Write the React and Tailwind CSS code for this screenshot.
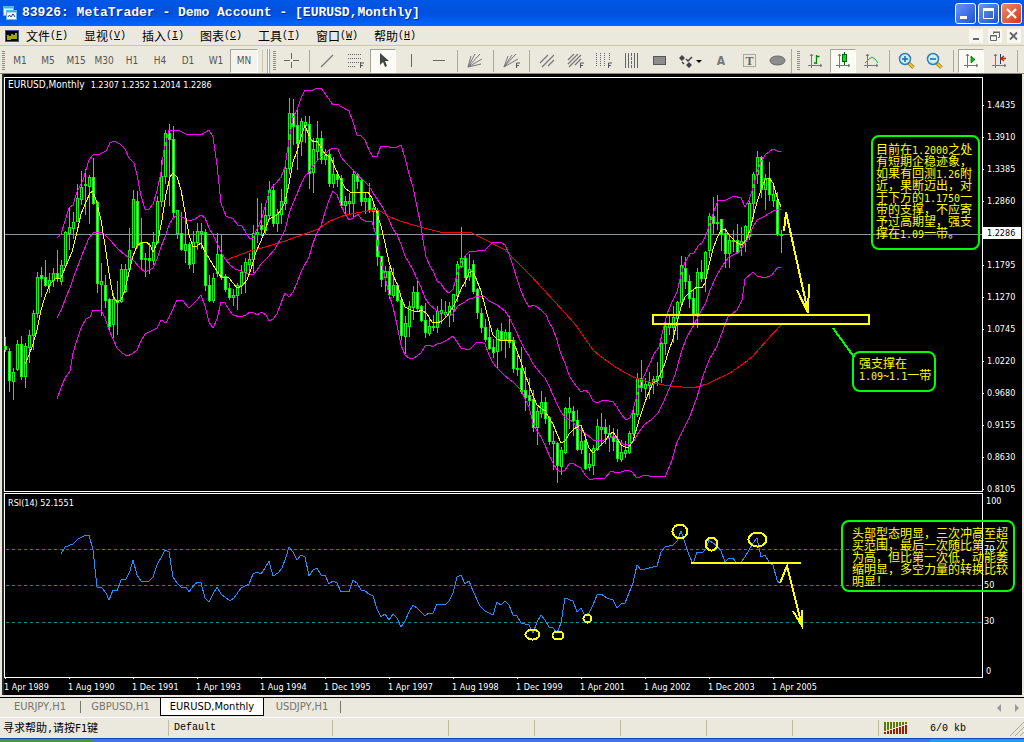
import React, { useState } from 'react';

const UI = "font-['DejaVu_Sans_Condensed','DejaVu_Sans',sans-serif]";
const CJK = "font-['Noto_Sans_CJK_SC',sans-serif]";

// [high, body top, body bottom, low, falling]; one candle every 4 units
const CANDLES = [
  [337,346,349,351,1],[348,351,380,391,1],[368,372,381,399,0],[340,344,369,370,0],[336,344,376,379,1],
  [343,346,376,387,0],[330,335,347,362,0],[310,313,335,349,0],[272,277,313,317,0],[267,275,278,296,1],
  [260,277,285,286,1],[273,280,285,292,0],[268,273,280,286,0],[250,273,278,281,1],[260,265,281,284,0],
  [231,232,265,266,0],[208,227,233,249,0],[212,222,228,238,0],[184,198,221,221,0],[171,187,199,204,0],
  [169,184,185,214,0],[175,177,186,223,0],[158,177,203,204,1],[201,202,283,292,1],[263,281,284,315,0],
  [275,285,300,307,1],[298,299,326,330,1],[293,299,324,337,0],[281,300,302,334,0],[264,269,301,302,0],
  [264,269,291,292,0],[228,250,269,270,0],[190,199,247,247,0],[191,201,245,247,1],[218,242,259,269,1],
  [253,258,259,276,0],[243,258,260,273,1],[232,242,260,264,0],[196,201,242,243,0],[160,176,201,206,0],
  [130,133,176,183,0],[124,133,139,205,1],[126,139,212,216,1],[210,210,233,238,0],[212,233,249,250,1],
  [220,244,250,262,0],[242,244,264,268,1],[231,242,263,272,0],[223,231,242,249,0],[223,231,233,248,0],
  [229,232,285,290,1],[275,285,300,301,1],[273,278,300,302,0],[233,254,273,276,0],[234,254,277,279,1],
  [274,276,289,291,1],[283,288,297,299,1],[289,295,297,305,0],[283,285,295,309,0],[265,272,285,293,0],
  [258,262,272,292,0],[253,259,264,274,0],[225,233,259,272,0],[198,232,234,242,0],[203,225,229,235,1],
  [204,215,230,233,0],[181,190,215,219,0],[184,190,223,226,1],[209,214,223,231,0],[189,201,214,223,0],
  [165,168,203,209,0],[98,113,168,173,0],[99,113,126,144,1],[109,125,143,169,1],[118,121,141,155,0],
  [116,122,125,142,0],[116,124,173,188,1],[138,149,172,192,0],[121,138,151,159,0],[131,138,159,163,1],
  [149,155,159,164,0],[151,154,183,186,1],[157,174,183,187,0],[171,174,179,186,1],[175,178,205,207,1],
  [196,201,205,215,0],[193,201,203,213,0],[171,174,203,217,0],[173,174,181,188,1],[178,180,201,205,1],
  [193,198,201,213,0],[183,198,210,212,1],[203,208,211,226,0],[208,210,256,265,1],[256,256,279,286,1],
  [266,271,277,291,0],[266,271,294,298,1],[268,285,295,297,0],[283,285,300,301,1],[299,300,335,339,1],
  [316,323,336,353,0],[301,306,326,336,0],[286,292,307,319,0],[280,292,308,310,1],[305,306,320,321,1],
  [303,320,332,337,1],[317,326,333,335,0],[315,326,327,330,0],[306,311,327,332,0],[299,310,313,323,0],
  [301,312,314,317,0],[302,306,315,326,0],[294,294,309,321,0],[261,264,295,301,0],[227,258,266,267,0],
  [255,258,277,286,1],[254,269,276,280,0],[260,264,291,293,1],[288,289,312,318,1],[308,313,327,332,1],
  [319,327,339,341,1],[322,337,348,349,1],[339,347,352,357,1],[328,330,351,367,0],[323,331,339,350,1],
  [329,332,339,357,0],[316,332,342,347,1],[337,340,368,372,1],[355,368,369,375,0],[347,368,391,393,1],
  [367,390,397,410,1],[378,395,400,405,1],[390,399,427,431,1],[407,411,427,444,0],[391,402,413,417,0],
  [397,402,418,423,1],[416,417,441,444,1],[431,441,443,469,0],[442,443,465,482,1],[447,450,466,474,0],
  [407,408,452,453,0],[397,408,412,428,0],[406,411,420,435,1],[410,420,449,450,1],[427,441,449,453,0],
  [433,440,468,469,1],[453,464,467,470,0],[445,448,465,474,0],[419,426,449,450,0],[413,427,429,445,0],
  [419,427,433,443,1],[425,433,437,451,0],[428,437,441,450,1],[429,439,458,461,1],[440,452,459,461,0],
  [441,450,453,457,0],[431,433,452,453,0],[408,413,433,435,0],[373,378,414,416,0],[360,378,387,391,1],
  [378,384,388,397,0],[372,382,385,398,0],[376,379,382,393,0],[362,376,380,385,0],[342,343,377,382,0],
  [320,326,343,354,0],[315,324,327,334,0],[306,317,327,342,0],[301,302,318,339,0],[256,265,302,303,0],
  [257,268,281,288,1],[275,281,298,307,1],[289,298,313,326,1],[268,272,313,327,0],[260,272,278,281,1],
  [251,252,278,291,0],[213,216,250,257,0],[197,216,223,234,1],[195,222,223,229,0],[219,219,234,250,1],
  [228,233,253,267,1],[235,240,253,267,0],[230,240,241,251,0],[224,240,252,253,1],[227,241,247,255,0],
  [225,226,241,251,0],[201,203,236,239,0],[172,174,203,218,0],[151,157,174,183,0],[156,157,189,197,1],
  [174,178,189,209,0],[162,178,194,200,1],[185,194,200,206,0],[192,200,234,235,1],[230,234,235,252,0],
];

const UPPER = '57,238 61,234 65,221 69,208 73,205 77,192 83,180 89,160 93,155 100,154 106,151 110,143 114,141 120,144 125,149 129,158 134,163 137,175 141,196 145,209 149,209 153,204 157,191 161,172 164,150 169,130 180,131 186,134 193,134 201,135 209,130 213,137 217,165 221,203 226,216 233,219 238,225 242,226 249,238 253,238 258,227 262,218 266,203 270,190 276,183 281,177 285,167 289,140 293,118 297,110 301,98 305,90 313,90 317,88 321,88 326,95 333,105 337,104 342,107 349,111 353,122 357,135 361,136 365,140 369,150 373,157 377,156 381,146 389,147 397,147 401,145 405,158 409,174 413,187 417,207 421,226 423,240 426,257 430,266 434,273 437,281 441,284 445,290 449,293 453,289 457,275 461,263 465,256 470,251 477,251 485,250 489,246 493,242 501,242 505,245 509,254 513,266 517,279 521,291 525,300 529,307 533,305 537,307 541,310 546,315 549,322 553,329 557,340 561,354 565,363 569,375 573,382 577,387 581,392 585,390 589,393 593,401 597,403 601,401 605,400 613,402 617,407 621,414 626,420 630,418 633,410 637,395 641,382 645,374 650,363 654,354 659,347 663,330 667,314 672,302 677,292 681,275 685,262 690,254 694,253 698,246 702,243 706,235 710,223 714,211 718,201 726,200 734,196 741,198 745,207 749,200 753,188 757,172 761,162 765,155 769,152 773,149 777,151 781,152';
const MIDDLE = '57,318 62,308 66,297 70,288 74,276 79,263 84,250 89,238 93,233 100,232 105,235 110,240 118,249 125,255 133,260 140,268 145,272 149,270 153,268 157,259 161,247 165,237 169,225 173,218 178,215 182,217 189,221 195,219 201,215 205,218 209,228 213,235 217,243 221,252 225,259 230,265 235,269 241,271 245,273 253,275 257,270 261,264 268,257 275,249 281,238 285,230 289,214 293,203 297,194 301,184 305,176 309,172 317,161 323,155 328,151 333,148 338,149 341,157 346,163 353,170 357,175 363,180 369,186 375,196 383,208 389,220 393,229 397,235 401,244 405,256 413,270 417,279 421,287 425,298 429,304 437,311 445,314 449,316 453,314 457,307 461,304 465,302 469,299 473,298 477,296 485,297 489,301 497,305 501,308 505,311 509,317 515,329 521,342 525,350 529,356 533,364 537,369 541,374 545,378 549,386 553,395 557,404 561,412 565,417 573,422 577,428 585,433 593,440 601,441 609,438 614,436 618,441 625,445 630,444 634,441 637,435 641,429 645,424 651,420 658,413 663,403 669,389 675,375 681,353 686,339 692,328 698,317 706,302 710,290 717,275 723,265 729,257 735,254 741,250 745,243 749,236 753,227 757,220 765,216 773,211 781,209';
const LOWER = '57,399 61,388 65,378 70,371 73,353 77,340 81,328 86,319 90,317 93,310 101,310 105,318 109,330 113,339 117,348 122,353 127,356 132,354 137,350 141,341 145,334 153,330 157,328 161,320 166,323 171,313 177,300 182,300 189,308 197,300 201,295 205,306 209,322 213,328 217,319 221,302 225,303 229,310 233,315 240,317 246,315 250,312 254,313 257,315 262,312 266,315 269,321 273,319 277,314 281,303 285,293 289,297 293,292 297,283 301,272 309,257 313,243 317,233 321,226 325,212 329,200 333,191 337,195 341,205 345,214 349,220 353,218 358,214 361,219 365,221 372,222 376,235 381,262 385,277 389,294 393,307 397,325 401,345 405,355 409,358 414,358 421,353 425,346 429,345 433,347 437,344 441,343 447,340 453,336 457,342 461,348 469,350 473,346 477,342 481,342 485,344 489,355 493,363 497,368 505,376 513,382 521,390 525,399 529,407 533,423 537,431 541,437 545,445 549,455 553,463 557,470 561,472 565,470 569,464 573,463 577,466 581,468 585,475 590,480 597,478 605,478 611,471 617,473 628,470 632,472 637,478 645,475 653,477 659,476 665,477 668,470 672,460 677,442 682,432 690,416 697,397 703,376 709,360 717,346 723,330 728,317 737,310 742,300 745,279 753,272 757,276 765,278 772,275 777,268 781,267';
const FAST_MA = '25,364 29,355 33,344 37,330 41,310 45,297 50,284 55,279 61,278 65,268 72,252 77,232 81,214 86,202 90,193 93,191 97,203 101,220 105,245 109,273 113,296 117,302 121,300 125,290 129,272 133,256 137,246 141,243 146,242 150,245 153,252 158,241 162,220 166,194 170,177 173,173 177,177 181,190 185,212 189,235 193,247 197,246 201,243 205,252 209,258 213,265 221,277 229,278 233,283 237,288 242,286 247,280 251,269 256,252 261,241 265,230 269,219 277,215 281,210 285,202 289,184 293,162 297,151 301,137 305,125 309,136 313,142 317,141 321,148 325,154 331,158 336,170 341,180 345,188 350,192 361,192 368,192 372,198 376,210 381,226 385,243 389,262 393,275 398,286 401,297 405,307 411,310 417,312 422,310 427,314 432,322 437,323 442,321 447,316 453,307 457,299 461,289 465,282 469,273 473,271 477,281 481,291 485,306 489,321 493,335 497,339 502,341 509,340 513,341 517,351 521,362 525,374 529,385 533,396 537,405 545,411 549,418 553,424 557,434 561,443 565,441 569,434 573,430 577,427 581,425 585,436 589,448 593,453 597,449 601,445 605,441 609,435 613,432 617,438 621,445 625,447 629,447 633,441 637,427 641,414 645,402 649,392 653,383 657,381 661,373 665,363 669,350 673,339 677,322 681,307 685,297 690,292 697,287 702,288 705,283 709,265 713,249 717,238 721,230 725,229 729,235 737,243 742,245 746,240 750,230 754,213 757,202 761,190 765,180 769,178 773,183 777,197 781,207';
const SLOW_MA = '226,260 250,251 262,248 285,241 310,232 318,229 330,221 345,215 362,212 373,210 380,211 390,217 400,221 420,227 440,232 472,233 482,238 505,250 530,275 555,302 575,324 593,350 600,356 617,368 633,377 653,383 670,386 693,388 707,384 730,373 743,364 753,356 767,340 781,325';
const RSI = '61,554 65,547 73,544 78,539 84,536 89,535 93,550 97,587 102,588 106,593 109,600 113,590 117,591 121,580 126,579 130,571 133,560 137,575 141,581 149,581 153,577 157,565 162,556 165,550 169,552 173,577 177,583 182,588 186,587 189,592 194,585 198,582 201,583 205,598 209,602 213,594 217,587 221,594 230,601 234,598 241,588 249,584 253,574 257,572 261,574 265,568 269,561 273,576 278,573 282,568 286,557 289,547 293,552 297,560 301,555 305,557 309,576 313,570 317,568 321,575 325,575 329,584 333,581 337,583 341,592 345,591 349,592 353,580 357,583 361,590 365,591 369,594 373,596 377,609 381,617 385,614 389,620 393,614 397,618 401,627 405,621 409,612 413,605 418,609 425,616 429,613 433,613 437,604 445,605 449,601 453,593 457,577 461,575 465,584 469,581 473,591 480,606 485,611 493,615 497,602 501,605 505,601 509,605 513,615 517,616 521,623 529,625 533,633 537,622 541,615 545,620 549,627 553,628 557,633 561,623 565,598 573,601 577,612 581,608 585,616 589,613 593,605 597,595 601,594 607,598 613,600 617,608 621,604 625,603 629,593 633,583 637,565 641,570 657,566 661,552 665,547 673,545 677,541 681,531 685,543 689,555 693,564 697,552 702,553 706,549 709,540 713,543 717,546 721,551 725,562 729,558 733,558 737,564 741,562 745,557 749,550 753,543 757,538 761,557 765,555 769,562 773,565 777,580 779,583';

const PRICES = ['1.4435', '1.3910', '1.3385', '1.2860', '1.2286', '1.1795', '1.1270', '1.0745', '1.0220', '0.9680', '0.9155', '0.8630', '0.8105'];
const DATES = ['1 Apr 1989', '1 Aug 1990', '1 Dec 1991', '1 Apr 1993', '1 Aug 1994', '1 Dec 1995', '1 Apr 1997', '1 Aug 1998', '1 Dec 1999', '1 Apr 2001', '1 Aug 2002', '1 Dec 2003', '1 Apr 2005'];
const MENUS = [['文件', 'F'], ['显视', 'V'], ['插入', 'I'], ['图表', 'C'], ['工具', 'T'], ['窗口', 'W'], ['帮助', 'H']];
const PERIODS = ['M1', 'M5', 'M15', 'M30', 'H1', 'H4', 'D1', 'W1', 'MN'];
const TABS = [
  { name: 'EURJPY,H1', width: 'w-20', rule: true },
  { name: 'GBPUSD,H1', width: 'w-[79px]' },
  { name: 'EURUSD,Monthly', width: 'w-[104px]' },
  { name: 'USDJPY,H1', width: 'w-[76px]', rule: true },
];

// Latin runs are set in half-width mono next to the full-width characters
function Mixed({ text }) {
  return text.split(/([\x20-\x7e]+)/).map((part, i) => (
    i % 2 ? <span key={i} className="font-['DejaVu_Sans_Mono',monospace] text-[10px]">{part}</span> : part
  ));
}

const smallF = <path d="M13.500 16v-5h3.500M13.500 13.500h2.500" stroke="#555" />;
const axes = <path d="M4.500 2v14M1 13.500h14M3 4l1.500-2L6 4M13 12l2 1.500-2 1.500" stroke="#777" />;

const ICONS = {
  '十字线': <path d="M8.500 1v6M8.500 10v6M1 8.500h6M10 8.500h6" stroke="#666" />,
  '趋势线': <path d="M2 15L14 3" stroke="#777" strokeWidth="1.300" />,
  '斐波纳契回调': <><path d="M1 2.500h14M1 6.500h14M1 10.500h14M1 14.500h8" stroke="#666" strokeDasharray="1 1" />{smallF}</>,
  '光标': <path d="M5 1v12l3-3 2 5 2-1-2-5h4z" fill="#444" />,
  '垂直线': <path d="M8.500 2v13" stroke="#666" />,
  '水平线': <path d="M2 8.500h12" stroke="#666" />,
  '江恩扇形': <path d="M1 15L4 4M1 15L8 2M1 15l12-13M1 15L15 7M1 15l13-3" stroke="#777" />,
  '斐波纳契扇形': <><path d="M1 15L5 4M1 15L9 3M1 15L13 2M1 15L15 7" stroke="#777" />{smallF}</>,
  '等距通道': <path d="M1 11L9 3M3 15L15 3M9 14l6-6" stroke="#777" strokeWidth="1.200" />,
  '斐波纳契通道': <><path d="M1 8l6-6M1 12L11 2M2 15L14 3M8 13l6-6" stroke="#777" strokeWidth="1.200" />{smallF}</>,
  '时间区': <><path d="M1.500 1v14M5.500 1v14M9.500 1v14M14.500 1v8" stroke="#666" strokeDasharray="1 1" />{smallF}</>,
  '周期线': <><path d="M2.500 1v15M5.500 1v15M11.500 1v15M14.500 1v15" stroke="#666" /><path d="M8.500 1v15" stroke="#666" strokeDasharray="3 1" /></>,
  '矩形': <rect x="2.500" y="4.500" width="12" height="8" fill="#8c8c8c" stroke="#555" />,
  '文本': <text x="8" y="13" textAnchor="middle" fontSize="12" fontWeight="700" fill="#777" fontFamily="DejaVu Sans Condensed">A</text>,
  '文本标签': <><rect x="2.500" y="2.500" width="12" height="12" stroke="#666" strokeDasharray="1 1" /><text x="8.500" y="13" textAnchor="middle" fontSize="12" fontWeight="700" fill="#666" fontFamily="Liberation Serif">T</text></>,
  '椭圆': <ellipse cx="8.500" cy="8.500" rx="7.500" ry="4.500" fill="#8c8c8c" stroke="#666" />,
  '柱状图': <>{axes}<path d="M9.500 3v9M9.500 4.500h3M7 11h2.500" stroke="#080" strokeWidth="1.300" /></>,
  '阴阳烛': <>{axes}<path d="M9.500 0v13" stroke="#060" /><rect x="7.500" y="2.500" width="4" height="7" fill="#0d3" stroke="#060" /></>,
  '折线图': <>{axes}<path d="M2 11l4-4 3-2 3 2 3 4" stroke="#3a3" /></>,
  '自动滚动': <>{axes}<path d="M8 4v7l4-3.500z" fill="#0b2" stroke="#060" strokeWidth=".7" /></>,
  '图表平移': <>{axes}<path d="M9.500 2v10" stroke="#146" /><path d="M15 6.500h-4M13 4l-3 2.500L13 9" stroke="#b20" strokeWidth="1.300" /></>,
};

function Zoomer({ plus }) {
  return (
    <svg viewBox="0 0 18 18" className="size-[18px]" fill="none">
      <path d="M10.500 11l5 4.500" stroke="#987000" strokeWidth="3.500" />
      <path d="M10.500 11l5 4.500" stroke="#f0c830" strokeWidth="2" />
      <circle cx="7" cy="7" r="5.500" fill="#c8f0ff" stroke="#2e7cb8" strokeWidth="1.500" />
      <path d={plus ? 'M4 7h6M7 4v6' : 'M4 7h6'} stroke="#1769a5" strokeWidth="1.500" />
    </svg>
  );
}

function Tool({ name, active, children, wide }) {
  return (
    <button
      type="button"
      aria-label={name}
      className={`flex h-6 shrink-0 items-center justify-center ${wide ? 'w-[34px]' : 'w-7'}`}
    >
      <span className={`flex h-6 w-[26px] items-center justify-center ${active ? 'border border-[#a5a39a] border-r-white border-b-white bg-[#fbfaf5]' : ''}`}>
        {children || <svg viewBox="0 0 17 17" className="size-[17px] overflow-visible" fill="none">{ICONS[name]}</svg>}
      </span>
    </button>
  );
}

const Sep = () => <span className="mr-[3px] ml-1 h-[22px] w-px shrink-0 bg-[#aaa89c]" />;
const Grip = () => <span className="mx-px h-5 w-[3px] shrink-0 bg-[repeating-linear-gradient(#8f8d84_0_1px,transparent_1px_2px)]" />;

function TitleBar() {
  const box = 'flex size-[21px] items-center justify-center rounded-[3px] border border-white';
  return (
    <header className="flex h-[26px] items-center justify-between bg-linear-to-b from-[#0058e6] via-[#0050dc] to-[#0066ff] pr-[2px] pl-[3px]">
      <div className="flex items-center gap-[5px]">
        <svg viewBox="0 0 14 16" className="h-4 w-[14px]" fill="none">
          <rect x="0.500" y="1.500" width="10" height="9" fill="#e8f8ff" stroke="#5cb8e8" />
          <rect x="3.500" y="5.500" width="10" height="9" fill="#fff" stroke="#5cb8e8" />
          <path d="M1 2.500h9M4 6.500h9" stroke="#48b0f0" strokeWidth="2" />
          <path d="M5 12l1.500-2 1.500 2 2-3 2 3" stroke="#248" />
        </svg>
        <h1 className="font-['Liberation_Mono',monospace] text-[13px] font-bold whitespace-pre text-white [text-shadow:1px_1px_0_#002a90]">83926: MetaTrader - Demo Account - [EURUSD,Monthly]</h1>
      </div>
      <div className="flex gap-[2px]">
        <button type="button" aria-label="最小化" className={`${box} bg-linear-to-br from-[#6a94f4] to-[#1c4fd8]`}>
          <svg viewBox="0 0 19 19" className="size-[19px]"><path d="M4 12h7v3H4z" fill="#fff" /></svg>
        </button>
        <button type="button" aria-label="最大化" className={`${box} bg-linear-to-br from-[#6a94f4] to-[#1c4fd8]`}>
          <svg viewBox="0 0 19 19" className="size-[19px]"><path d="M4.500 5v9.500h10V5" stroke="#fff" fill="none" /><path d="M4 4h11v3H4z" fill="#fff" /></svg>
        </button>
        <button type="button" aria-label="关闭" className={`${box} bg-linear-to-br from-[#f08868] to-[#cc3810]`}>
          <svg viewBox="0 0 19 19" className="size-[19px]"><path d="M5 5l9 9M14 5l-9 9" stroke="#fff" strokeWidth="2.200" /></svg>
        </button>
      </div>
    </header>
  );
}

function MenuBar() {
  return (
    <nav className="flex h-5 items-center border-b border-[#c9c7a4] pr-[3px] pl-[5px]">
      <svg viewBox="0 0 14 12" className="mr-[7px] h-3 w-[14px]" fill="none">
        <rect width="14" height="12" fill="#000" /><rect x="0.500" y="0.500" width="13" height="11" stroke="#3858a0" />
        <path d="M3 5v5M5 6v4M7 4v5M9 5v4M11 3v6" stroke="#ff0" strokeWidth="1.300" />
      </svg>
      {MENUS.map(([label, key]) => (
        <button key={key} type="button" className={`${CJK} flex w-[58px] shrink-0 items-center text-xs leading-4 text-black`}>
          {label}
          <span className="font-['Liberation_Mono',monospace] text-[10px]">(<u>{key}</u>)</span>
        </button>
      ))}
      <div className="ml-auto flex gap-[5px]">
        <button type="button" aria-label="最小化图表" className="size-[14px] bg-[#f8f7f2]"><svg viewBox="0 0 14 14"><path d="M4 9h6v2H4z" fill="#666" /></svg></button>
        <button type="button" aria-label="还原图表" className="size-[14px] bg-[#f8f7f2]"><svg viewBox="0 0 14 14" fill="none" stroke="#666"><path d="M5.500 5V3.500h6v5H10M2.500 6.500h6v5h-6zM2 7h7M5 3h7" /></svg></button>
        <button type="button" aria-label="关闭图表" className="size-[14px] bg-[#f8f7f2]"><svg viewBox="0 0 14 14" fill="none"><path d="M3 3.500l7 7M10 3.500l-7 7" stroke="#666" strokeWidth="1.800" /></svg></button>
      </div>
    </nav>
  );
}

function ToolBar({ period, onPeriod }) {
  return (
    <div className="flex h-7 items-center overflow-hidden border-b border-[#8a887c] pt-[2px] pl-px">
      <Grip />
      {PERIODS.map(p => (
        <button
          key={p}
          type="button"
          onClick={() => onPeriod(p)}
          className={`${UI} h-6 w-7 shrink-0 text-center text-[10px] text-[#555] ${p === period ? 'border border-[#a5a39a] border-r-white border-b-white bg-[#f4f3ec]' : ''}`}
        >
          {p}
        </button>
      ))}
      <span className="mx-1 h-[22px] w-px shrink-0 bg-[#c9c7a4]" />
      <span className="mr-[2px] h-6 w-[3px] shrink-0 border-x border-[#aaa89c] bg-white" />
      <Grip />
      <Tool name="十字线" />
      <Sep />
      <Tool name="趋势线" />
      <Tool name="斐波纳契回调" />
      <Tool name="光标" active />
      <Tool name="垂直线" />
      <Tool name="水平线" />
      <Sep />
      <Tool name="江恩扇形" />
      <Sep />
      <Tool name="斐波纳契扇形" />
      <Sep />
      <Tool name="等距通道" />
      <Tool name="斐波纳契通道" />
      <Tool name="时间区" />
      <Tool name="周期线" />
      <Tool name="矩形" />
      <Tool name="箭头" wide>
        <svg viewBox="0 0 24 16" className="h-4 w-6 shrink-0" fill="none">
          <path d="M1 5l3-3 3 3-3 3zM8 12l3-3 3 3-3 3z" fill="#444" />
          <path d="M4 9l2 2M8 6l2 2 4-4" stroke="#444" strokeWidth="1.500" />
          <path d="M18 7h6l-3 3z" fill="#000" />
        </svg>
      </Tool>
      <Tool name="文本" />
      <Tool name="文本标签" />
      <Tool name="椭圆" />
      <span className="mr-1 h-6 w-px shrink-0 bg-[#aaa89c]" />
      <Grip />
      <Tool name="柱状图" />
      <Tool name="阴阳烛" active />
      <Tool name="折线图" />
      <Sep />
      <Tool name="放大"><Zoomer plus /></Tool>
      <Tool name="缩小"><Zoomer /></Tool>
      <Sep />
      <Tool name="自动滚动" active />
      <Tool name="图表平移" />
      <Sep />
    </div>
  );
}

function PriceChart() {
  return (
    <svg viewBox="4 74 980 419" className="block w-full" fill="none" shapeRendering="crispEdges">
      <path d="M4.500 491.500V77.500H982.500V491.500Z" stroke="#fff" />
      {PRICES.map((p, i) => <path key={p} d={`M982 ${105.5 + i * 32}h2`} stroke="#fff" />)}
      <path d="M5 234.500H982" stroke="#8a949e" />
      {CANDLES.map(([high, top, bottom, low, down], i) => {
        const x = 5 + i * 4;
        return (
          <g key={i}>
            <path d={`M${x + 0.5} ${high}V${low + 1}`} stroke="#0f0" />
            <rect x={x - 0.5} y={top + 0.5} width="2" height={Math.max(bottom - top, 1)} fill={down ? '#fff' : '#000'} stroke="#0f0" />
          </g>
        );
      })}
      <polyline points={SLOW_MA} stroke="#f00" />
      <polyline points={UPPER} stroke="#f0f" />
      <polyline points={MIDDLE} stroke="#f0f" />
      <polyline points={LOWER} stroke="#f0f" />
      <polyline points={FAST_MA} stroke="#ff0" />
      <rect x="653" y="315" width="216" height="9" stroke="#ff0" strokeWidth="2" />
      <path d="M784 231l2-19 22 100M797 290l11 23 1-29" stroke="#ff0" strokeWidth="2" />
      <path d="M833 328l21 29" stroke="#0f0" strokeWidth="2" />
    </svg>
  );
}

function RsiChart() {
  return (
    <svg viewBox="4 493 980 186" className="block w-full" fill="none" shapeRendering="crispEdges">
      <path d="M4.500 677.500V493.500H982.500V677.500Z" stroke="#fff" />
      {DATES.map((d, i) => <path key={d} d={`M${5.5 + i * 64} 678v2`} stroke="#fff" />)}
      <path d="M6 549.500H982M6 585.500H982M6 622.500H982" stroke="#009090" strokeDasharray="3 3" />
      <polyline points={RSI} stroke="#1e90ff" />
      <g stroke="#ff0" strokeWidth="2">
        <ellipse cx="680" cy="531.500" rx="7.500" ry="7" />
        <ellipse cx="711.500" cy="544" rx="6" ry="6.500" />
        <ellipse cx="757.500" cy="539.500" rx="9" ry="7" />
        <ellipse cx="532.500" cy="634.500" rx="7" ry="5" />
        <ellipse cx="558" cy="635.500" rx="5.500" ry="4" />
        <ellipse cx="587.500" cy="618.500" rx="4" ry="4" />
        <path d="M691 563H801M780 583l7-17 15 60M793 611l9 15v-16" />
      </g>
    </svg>
  );
}

function Note({ lines, className }) {
  return (
    <div className={`${CJK} absolute rounded-lg border-2 border-[#0f0] text-xs leading-3 whitespace-nowrap text-[#ff0] ${className}`}>
      {lines.map(l => <p key={l} className="h-3"><Mixed text={l} /></p>)}
    </div>
  );
}

function Chart() {
  return (
    <main className={`${UI} relative mr-[2px] ml-[2px] border-l-2 border-[#2c2c28] bg-black text-[9px] text-white`}>
      <div className="flex">
        <div className="min-w-0 flex-1"><PriceChart /></div>
        <div className="flex w-[38px] flex-col gap-6 pt-[27px] leading-2">
          {PRICES.map(p => (
            <span key={p} className={`flex h-2 items-center pl-[3px] ${p === '1.2286' ? 'mr-[3px] bg-white text-black outline-2 outline-white' : ''}`}>{p}</span>
          ))}
        </div>
      </div>
      <div className="flex">
        <div className="min-w-0 flex-1"><RsiChart /></div>
        <div className="w-[38px] pt-1 leading-2">
          <p className="h-2 pl-[2px]">100</p>
          <p className="mt-10 h-2">70</p>
          <p className="mt-7 h-2">50</p>
          <p className="mt-7 h-2">30</p>
          <p className="mt-[42px] h-2 pl-[2px]">0</p>
        </div>
      </div>
      <div className="flex h-4">
        {DATES.map(d => <span key={d} className="w-16 shrink-0 leading-4 whitespace-nowrap">{d}</span>)}
      </div>

      <p className="absolute top-[5px] left-1 flex items-baseline gap-[6px] leading-3">
        <span className="text-[10px]">EURUSD,Monthly</span>
        <span>1.2307 1.2352 1.2014 1.2286</span>
      </p>
      <p className="absolute top-[423px] left-1 leading-3">RSI(14) 52.1551</p>

      <Note
        className="top-[61px] right-[42px] h-[115px] w-[109px] px-[3px] pt-[6px]"
        lines={['目前在1.2000之处', '有短期企稳迹象，', '如果有回测1.26附', '近，果断迈出，对', '于下方的1.1750一', '带的支撑，不应寄', '予过高期望，强支', '撑在1.09一带。']}
      />
      <Note className="top-[277px] right-[86px] h-[41px] w-[84px] px-[5px] pt-1" lines={['强支撑在', '1.09~1.1一带']} />
      <Note
        className="top-[446px] right-[7px] h-[72px] w-[174px] px-[9px] pt-[5px]"
        lines={['头部型态明显，三次冲高至超', '买范围，最后一次随比第二次', '为高，但比第一次低，动能萎', '缩明显，多空力量的转换比较', '明显！']}
      />
    </main>
  );
}

function Tabs({ current, onSelect }) {
  return (
    <div className={`${UI} mt-[2px] flex h-5 items-start border-t border-black text-[11px] text-[#77756c]`}>
      {TABS.map(({ name, width, rule }) => (
        <React.Fragment key={name}>
          <button
            type="button"
            onClick={() => onSelect(name)}
            className={`h-[18px] shrink-0 text-center leading-4 whitespace-nowrap ${width} ${name === current ? 'border border-t-0 border-black bg-white text-black' : ''}`}
          >
            {name}
          </button>
          {rule && <span className="mt-[3px] h-3 w-px bg-[#77756c]" />}
        </React.Fragment>
      ))}
      <svg viewBox="0 0 22 8" className="mt-[6px] mr-[5px] ml-auto h-2 w-[22px]" fill="#999"><path d="M4 0v8L0 4zM18 0v8l4-4z" /></svg>
    </div>
  );
}

function StatusBar() {
  const cell = 'h-4 w-[86px] border-l border-[#c0be9c]';
  return (
    <footer className="flex h-[21px] items-center border-t border-white text-black">
      <span className={`${CJK} flex-1 pl-[3px] text-[11px] leading-4 whitespace-nowrap`}><Mixed text="寻求帮助,请按F1键" /></span>
      <span className="h-4 w-[164px] border-l border-[#c0be9c] pl-[5px] font-['Liberation_Mono',monospace] text-[10px] leading-4">Default</span>
      <span className="h-4 w-[116px] border-l border-[#c0be9c]" />
      <span className={cell} />
      <span className={cell} />
      <span className={cell} />
      <span className={cell} />
      <span className={cell} />
      <span className="flex h-4 w-[146px] items-center border-l border-[#c0be9c] pl-[5px] font-['Liberation_Mono',monospace] text-[10px]">
        <svg viewBox="0 0 24 12" className="h-3 w-6" shapeRendering="crispEdges">
          {[0, 1, 2, 3, 4, 5, 6, 7].map(i => (
            <React.Fragment key={i}>
              <path d={`M${i * 3} 0h2v${9 - i}h-2z`} fill="#5a7a00" />
              <path d={`M${i * 3} ${10 - i}h2V12h-2z`} fill="#992200" />
            </React.Fragment>
          ))}
        </svg>
        <span className="ml-[22px]">6/0 kb</span>
        <svg viewBox="0 0 14 14" className="mt-auto ml-auto size-[14px]" stroke="#aaa890"><path d="M0 14L14 0M5 14l9-9M10 14l4-4" /></svg>
      </span>
    </footer>
  );
}

export default function App() {
  const [period, setPeriod] = useState('MN');
  const [tab, setTab] = useState('EURUSD,Monthly');

  return (
    <div className="w-full bg-[#ebe8dd]">
      <TitleBar />
      <MenuBar />
      <ToolBar period={period} onPeriod={setPeriod} />
      <Chart />
      <Tabs current={tab} onSelect={setTab} />
      <StatusBar />
      {/* Top edge of the desktop taskbar */}
      <div className="flex h-1 border-t border-[#1848b8] bg-[#3878e8]">
        <span className="w-[93px] rounded-tr bg-[#3c9c3c]" />
        <span className="ml-auto w-[94px] bg-[#18a0f0]" />
      </div>
    </div>
  );
}
